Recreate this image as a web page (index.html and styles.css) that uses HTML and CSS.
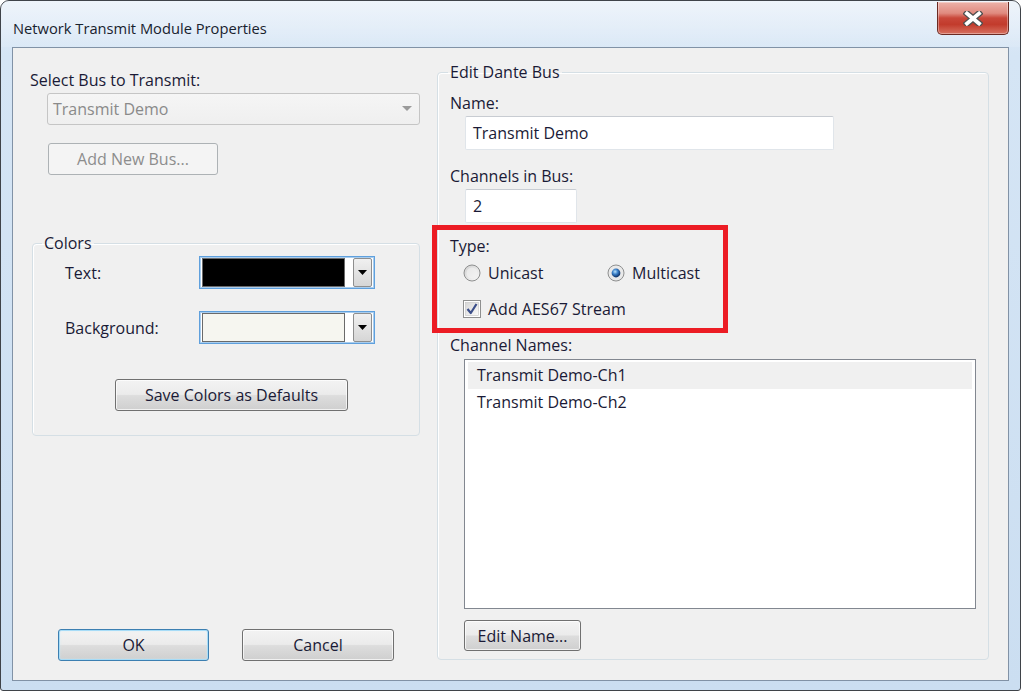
FILE: index.html
```html
<!DOCTYPE html>
<html>
<head>
<meta charset="utf-8">
<link rel="stylesheet" href="styles.css">
</head>
<body>
<div class="window">
  <div class="titlebar">
    <div class="title">Network Transmit Module Properties</div>
    <div class="close">
      <svg width="20" height="15" viewBox="0 0 20 15">
        <path d="M4 2.5 L16 12.5 M16 2.5 L4 12.5" stroke="#4f4f4f" stroke-width="6.4" stroke-linecap="square" fill="none"/>
        <path d="M4 2.5 L16 12.5 M16 2.5 L4 12.5" stroke="#ffffff" stroke-width="3.8" stroke-linecap="square" fill="none"/>
      </svg>
    </div>
  </div>
  <div class="client">
    <div class="left">
      <div class="lbl">Select Bus to Transmit:</div>
      <div class="combo disabled">
        <span>Transmit Demo</span>
        <svg class="carrow" width="10" height="6" viewBox="0 0 10 6"><path d="M0 0 H10 L5 5 Z" fill="#9a9a9a"/></svg>
      </div>
      <div class="btn dis addbus">Add New Bus...</div>
      <fieldset class="group colors">
        <legend>Colors</legend>
        <div class="crow first">
          <div class="clbl">Text:</div>
          <div class="cpick">
            <div class="swatch black"></div>
            <div class="cbtn"><svg width="9" height="5" viewBox="0 0 9 5"><path d="M0 0 H9 L4.5 5 Z" fill="#000"/></svg></div>
          </div>
        </div>
        <div class="crow">
          <div class="clbl">Background:</div>
          <div class="cpick">
            <div class="swatch cream"></div>
            <div class="cbtn"><svg width="9" height="5" viewBox="0 0 9 5"><path d="M0 0 H9 L4.5 5 Z" fill="#000"/></svg></div>
          </div>
        </div>
        <div class="btn savebtn">Save Colors as Defaults</div>
      </fieldset>
      <div class="okrow">
        <div class="btn ok">OK</div>
        <div class="btn cancel">Cancel</div>
      </div>
    </div>
    <fieldset class="group dante">
      <legend>Edit Dante Bus</legend>
      <div class="lbl">Name:</div>
      <div class="input name">Transmit Demo</div>
      <div class="lbl chl">Channels in Bus:</div>
      <div class="input chn">2</div>
      <div class="typebox">
        <div class="lbl">Type:</div>
        <div class="radios">
          <div class="opt uni">
            <svg width="18" height="18" viewBox="0 0 18 18">
              <defs>
                <linearGradient id="rg1" x1="0" y1="0" x2="1" y2="1">
                  <stop offset="0" stop-color="#cfcfcf"/>
                  <stop offset="1" stop-color="#fafafa"/>
                </linearGradient>
              </defs>
              <circle cx="9" cy="9" r="8" fill="url(#rg1)" stroke="#8e8f8f" stroke-width="1"/>
              <circle cx="9" cy="9" r="5.5" fill="#f4f4f4" opacity="0.6"/>
            </svg>
            <span>Unicast</span>
          </div>
          <div class="opt multi">
            <svg width="18" height="18" viewBox="0 0 18 18">
              <defs>
                <radialGradient id="rg2" cx="0.4" cy="0.35" r="0.6">
                  <stop offset="0" stop-color="#b9e2fb"/>
                  <stop offset="0.5" stop-color="#3a7fc8"/>
                  <stop offset="1" stop-color="#13386e"/>
                </radialGradient>
              </defs>
              <circle cx="9" cy="9" r="8" fill="#e9e9e9" stroke="#8e8f8f" stroke-width="1"/>
              <circle cx="9" cy="9" r="4.4" fill="url(#rg2)"/>
            </svg>
            <span>Multicast</span>
          </div>
        </div>
        <div class="opt chk">
          <svg width="18" height="18" viewBox="0 0 18 18">
            <defs>
              <linearGradient id="cg" x1="0" y1="0" x2="1" y2="1">
                <stop offset="0" stop-color="#d6d6d6"/>
                <stop offset="1" stop-color="#fbfbfb"/>
              </linearGradient>
            </defs>
            <rect x="0.5" y="0.5" width="17" height="17" fill="#ffffff" stroke="#8e8f8f"/>
            <rect x="2.5" y="2.5" width="13" height="13" fill="url(#cg)" stroke="#c4c4c4" stroke-width="0.6"/>
            <path d="M4.5 9 L7.8 13 L13.5 4" stroke="#3c4f8a" stroke-width="2.2" fill="none" stroke-linejoin="round"/>
          </svg>
          <span>Add AES67 Stream</span>
        </div>
      </div>
      <div class="lbl cnl">Channel Names:</div>
      <div class="listbox">
        <div class="item sel">Transmit Demo-Ch1</div>
        <div class="item">Transmit Demo-Ch2</div>
      </div>
      <div class="btn editname">Edit Name...</div>
    </fieldset>
  </div>
</div>
</body>
</html>
```

FILE: styles.css
```css
* { box-sizing: border-box; }
html, body { margin: 0; padding: 0; background: #ffffff; }
body {
  font-family: "Open Sans", "Noto Sans", sans-serif;
  font-size: 16px;
  color: #1a1a36;
  width: 1023px;
  height: 692px;
  overflow: hidden;
}
.window {
  width: 1021px;
  height: 691px;
  border: 1px solid #3f4349;
  border-radius: 9px 9px 3px 3px;
  background: linear-gradient(180deg, #e0ebf7 0%, #d5e5f5 8%, #cbdef1 100%);
  display: flex;
  flex-direction: column;
}
.titlebar {
  height: 46px;
  display: flex;
  justify-content: space-between;
  align-items: flex-start;
  padding: 0 11px 0 12px;
  background: linear-gradient(180deg, rgba(255,255,255,0.45), rgba(255,255,255,0.1) 100%);
  border-radius: 8px 8px 0 0;
}
.title {
  padding-top: 17px;
  font-size: 14.7px;
  line-height: 20px;
  color: #18222e;
}
.close {
  margin-top: 1px;
  width: 72px;
  height: 33px;
  border: 1px solid #6b2a22;
  border-top: none;
  border-radius: 0 0 5px 5px;
  background: linear-gradient(180deg, #ecb2a9 0%, #e08a7f 35%, #c9473a 50%, #c23b2c 70%, #d77160 100%);
  box-shadow: inset 0 0 0 1px rgba(255,255,255,0.35);
  display: flex;
  align-items: center;
  justify-content: center;
}
.client {
  margin: 0 11px 0 11px;
  height: 634px;
  border: 1px solid #8192a6;
  background: #f0f0f0;
  display: flex;
  padding: 0 19px 0 17px;
  gap: 17px;
}
.lbl { line-height: 20px; height: 20px; white-space: nowrap; }
.left {
  width: 390px;
  display: flex;
  flex-direction: column;
  padding-top: 22px;
  padding-bottom: 19px;
}
.combo {
  margin: 3px 0 0 17px;
  height: 32px;
  border: 1px solid #c5c5c5;
  border-radius: 3px;
  background: linear-gradient(180deg, #f5f5f5, #efefef);
  display: flex;
  align-items: center;
  justify-content: space-between;
  padding: 0 7px 0 5px;
  color: #8a8a8a;
}
.btn {
  height: 32px;
  border: 1px solid #707070;
  border-radius: 3px;
  background: linear-gradient(180deg, #f3f3f3 0%, #ebebeb 48%, #dddddd 52%, #cfcfcf 100%);
  box-shadow: inset 0 0 0 1px rgba(255,255,255,0.7);
  display: flex;
  align-items: center;
  justify-content: center;
  color: #1a1a36;
  white-space: nowrap;
}
.btn.dis {
  border-color: #adb2b5;
  background: #f4f4f4;
  color: #8d8d8d;
  box-shadow: none;
}
.addbus { margin: 18px 0 0 18px; width: 170px; }
fieldset.group {
  border: 1px solid #d5dfe5;
  border-radius: 4px;
  margin: 0;
  box-shadow: 1px 1px 0 #ffffff inset;
}
fieldset.group legend {
  padding: 0 2px;
  line-height: 20px;
  margin-left: -2px;
}
.colors {
  margin: 58px 0 0 2px !important;
  padding: 0 0 24px 32px;
  height: 203px;
}
.colors legend { margin-left: -23px !important; }
.crow {
  display: flex;
  align-items: center;
  margin-top: 22px;
  height: 33px;
}
.crow.first { margin-top: 3px; }
.clbl { width: 134px; }
.cpick {
  width: 176px;
  height: 33px;
  border: 1px solid #5fa0dd;
  box-shadow: inset 0 0 0 1px #a9cdee;
  background: #ffffff;
  display: flex;
  align-items: center;
  padding: 0 2px;
}
.swatch {
  width: 145px;
  height: 29px;
  border: 1px solid #6a6a6a;
}
.swatch.black { background: #000000; }
.swatch.cream { background: #f6f6f0; }
.cbtn {
  margin-left: 8px;
  width: 19px;
  height: 29px;
  border: 1px solid #8e8e8e;
  border-radius: 2px;
  background: linear-gradient(180deg, #f0f0f0, #d6d6d6);
  display: flex;
  align-items: center;
  justify-content: center;
}
.savebtn { margin: 35px 0 0 50px; width: 233px; }
.okrow {
  margin-top: auto;
  display: flex;
  gap: 33px;
  padding-left: 28px;
}
.ok {
  width: 151px;
  border-color: #3c7fb1;
  box-shadow: inset 0 0 0 1px #a7dcf7, inset 0 0 3px #c8ebfc;
}
.cancel { width: 152px; }
.dante {
  width: 552px;
  margin-top: 14px !important;
  height: 598px;
  padding: 11px 10px 10px 12px;
}
.input {
  margin: 3px 0 0 15px;
  height: 34px;
  background: #ffffff;
  border: 1px solid #e0e5ea;
  border-top-color: #c8ccd2;
  border-radius: 2px;
  display: flex;
  align-items: center;
  padding-left: 7px;
}
.name { width: 369px; }
.chn { width: 112px; }
.chl { margin-top: 16px; }
.typebox {
  position: relative;
  margin-top: 13px;
}
.typebox::before {
  content: "";
  position: absolute;
  left: -18px;
  top: -11px;
  width: 286px;
  height: 98px;
  border: 5px solid #ec1c24;
  pointer-events: none;
}
.radios {
  display: flex;
  margin-top: 7px;
  padding-left: 13px;
}
.opt {
  display: flex;
  align-items: center;
  gap: 7px;
  height: 20px;
  line-height: 20px;
}
.uni { width: 144px; }
.chk { margin-top: 16px; padding-left: 13px; }
.cnl { margin-top: 16px; }
.listbox {
  margin: 4px 0 0 14px;
  width: 512px;
  height: 250px;
  border: 1px solid #828790;
  background: #ffffff;
  padding: 2px 3px;
}
.item {
  height: 27px;
  line-height: 27px;
  padding-left: 9px;
}
.item.sel { background: #f0f0f0; }
.editname { margin: 11px 0 0 14px; width: 117px; height: 31px; }
```
